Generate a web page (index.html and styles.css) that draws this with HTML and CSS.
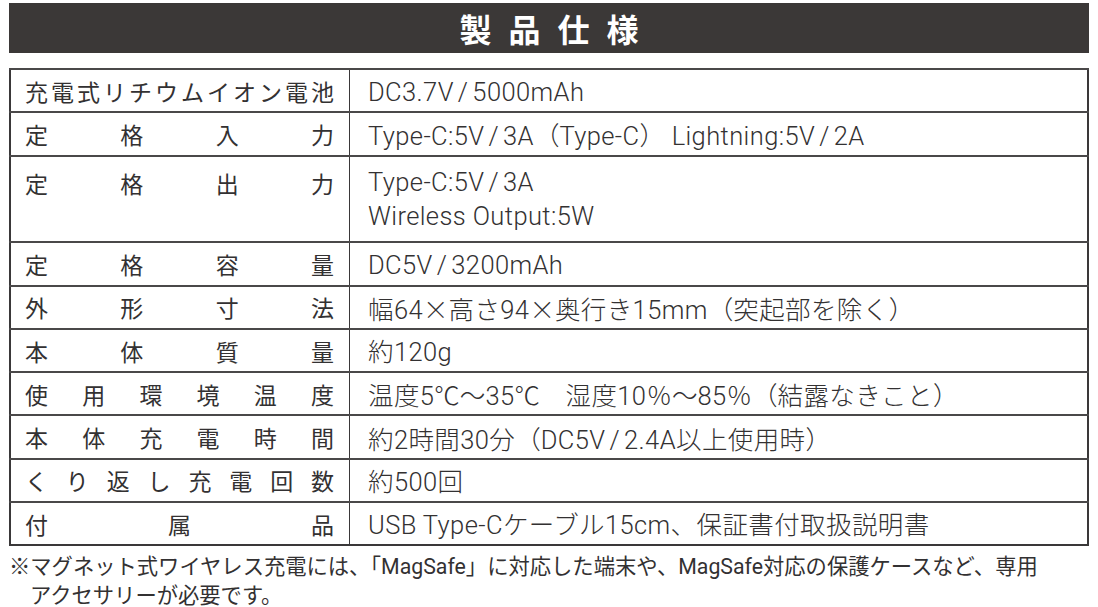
FILE: index.html
```html
<!DOCTYPE html>
<html lang="ja">
<head>
<meta charset="utf-8">
<title>製品仕様</title>
<link rel="stylesheet" href="styles.css">
</head>
<body>
<div class="sheet">
  <h1 class="title">製品仕様</h1>
  <table class="spec">
    <tbody>
      <tr><th>充電式リチウムイオン電池</th><td>DC3.7V<span class="sl">/</span>5000mAh</td></tr>
      <tr><th>定格入力</th><td>Type-C:5V<span class="sl">/</span>3A<span class="fw">（</span>Type-C<span class="fw">）</span> Lightning:5V<span class="sl">/</span>2A</td></tr>
      <tr class="tall"><th>定格出力</th><td>Type-C:5V<span class="sl">/</span>3A<br>Wireless Output:5W</td></tr>
      <tr><th>定格容量</th><td>DC5V<span class="sl">/</span>3200mAh</td></tr>
      <tr><th>外形寸法</th><td>幅64<span class="fw">×</span>高さ94<span class="fw">×</span>奥行き15mm<span class="fw">（</span>突起部を除く<span class="fw">）</span></td></tr>
      <tr><th>本体質量</th><td>約120g</td></tr>
      <tr><th>使用環境温度</th><td>温度5<span class="fw">℃～</span>35<span class="fw">℃　</span>湿度10<span class="fw">％～</span>85<span class="fw">％（</span>結露なきこと<span class="fw">）</span></td></tr>
      <tr><th>本体充電時間</th><td>約2時間30分<span class="fw">（</span>DC5V<span class="sl">/</span>2.4A以上使用時<span class="fw">）</span></td></tr>
      <tr><th>くり返し充電回数</th><td>約500回</td></tr>
      <tr><th>付属品</th><td>USB Type-Cケーブル15cm、保証書付取扱説明書</td></tr>
    </tbody>
  </table>
  <p class="note">※マグネット式ワイヤレス充電には、「MagSafe」に対応した端末や、MagSafe対応の保護ケースなど、専用<br>アクセサリーが必要です。</p>
</div>
</body>
</html>
```
FILE: styles.css
```css
html, body {
  margin: 0;
  padding: 0;
  background: #ffffff;
}

body {
  color: #333132;
  font-family: "Roboto", "Noto Sans CJK JP", sans-serif;
}

.sheet {
  padding: 3px 9px 0 9px;
  width: 1080px;
}

.title {
  margin: 0;
  height: 50px;
  background: #3b3837;
  color: #ffffff;
  font-family: "Noto Sans CJK JP", sans-serif;
  font-weight: 700;
  font-size: 32px;
  line-height: 50px;
  letter-spacing: 17px;
  padding-left: 17px;
  text-align: center;
}

.spec {
  margin-top: 15px;
  width: 1080px;
  border-collapse: collapse;
  border: 2px solid #3a3839;
}

.spec th,
.spec td {
  height: 41.3px;
  line-height: 26px;
  padding: 0;
  border-top: 2px solid #4a4849;
  font-size: 23px;
  font-weight: 400;
  vertical-align: middle;
  white-space: nowrap;
}

.spec th {
  width: 309px;
  padding-left: 14px;
  padding-right: 15px;
  border-right: 1px solid #3a3839;
  font-family: "Noto Sans CJK JP", sans-serif;
  text-align: justify;
  text-align-last: justify;
}

.spec td {
  height: 38.3px;
  padding-left: 18px;
  padding-top: 3px;
  font-size: 25.5px;
  font-weight: 300;
  letter-spacing: 0.4px;
}

.spec tr.tall th,
.spec tr.tall td {
  line-height: 34px;
}

.spec tr.tall td {
  height: 84.7px;
  padding-top: 0;
}

.spec tr.tall th {
  vertical-align: top;
  padding-top: 9px;
  height: 75.7px;
}

.sl {
  margin: 0 4px;
}

.fw {
  font-family: "Noto Sans CJK JP", sans-serif;
  font-weight: 300;
  letter-spacing: 0;
}

.fw + .fw,
.lt {
  margin-left: 0;
}

.note {
  margin: 6px 0 0 0;
  padding-left: 21px;
  text-indent: -21px;
  font-family: "Roboto", "Noto Sans CJK JP", sans-serif;
  font-size: 21.3px;
  line-height: 29px;
  white-space: nowrap;
}
```
